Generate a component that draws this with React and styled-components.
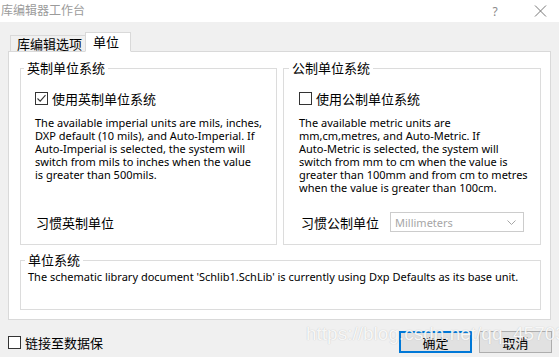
import React from "react";
import styled, { createGlobalStyle } from "styled-components";

const GlobalStyle = createGlobalStyle`
  html, body {
    margin: 0;
    padding: 0;
    background: #f0f0f0;
  }
  body {
    font-family: "Noto Sans", "Noto Sans CJK SC", sans-serif;
  }
`;

const Window = styled.div`
  position: relative;
  width: 559px;
  height: 357px;
  background: #f0f0f0;
  display: flex;
  flex-direction: column;
  overflow: hidden;
  font-family: "Noto Sans", "Noto Sans CJK SC", sans-serif;
`;

const TitleBar = styled.div`
  height: 22px;
  background: #fff;
  display: flex;
  align-items: center;
  padding: 0 1px 0 1px;
  color: #9b9b9b;
  font-size: 12px;
`;

const Title = styled.span`
  flex: 1;
  line-height: 22px;
`;

const TitleButton = styled.span`
  width: ${(p) => p.w}px;
  margin-right: ${(p) => p.mr || 0}px;
  display: flex;
  align-items: center;
  justify-content: center;
  color: #8a8a8a;
  font-size: 12px;
`;

const Body = styled.div`
  padding: 10px 8px 0 8px;
`;

const TabRow = styled.div`
  display: flex;
  align-items: flex-end;
  height: 20px;
  padding-left: 2px;
  margin-bottom: -1px;
`;

const Tab = styled.div`
  position: relative;
  z-index: ${(p) => (p.active ? 2 : 1)};
  box-sizing: border-box;
  width: ${(p) => p.w}px;
  height: ${(p) => (p.active ? 20 : 17)}px;
  margin-left: ${(p) => (p.active ? -1 : 0)}px;
  padding-left: ${(p) => p.pl}px;
  border: 1px solid #d9d9d9;
  border-bottom: ${(p) => (p.active ? "1px solid #fff" : "1px solid #d9d9d9")};
  background: ${(p) => (p.active ? "#fff" : "#f0f0f0")};
  font-size: 13px;
  line-height: ${(p) => (p.active ? 19 : 16)}px;
  color: #000;
  white-space: nowrap;
`;

const Panel = styled.div`
  box-sizing: border-box;
  height: 269px;
  border: 1px solid #d9d9d9;
  background: #fff;
  padding: 8px 9px 0 11px;
  display: flex;
  flex-direction: column;
`;

const Columns = styled.div`
  display: grid;
  grid-template-columns: 257px 258px;
  column-gap: 6px;
`;

const Group = styled.fieldset`
  box-sizing: border-box;
  margin: 0;
  min-width: 0;
  height: ${(p) => p.h}px;
  border: 1px solid #dcdcdc;
  padding: 0 ${(p) => p.px}px 0 ${(p) => p.px}px;
  display: flex;
  flex-direction: column;
`;

const Legend = styled.legend`
  margin-left: ${(p) => p.ml}px;
  padding: 0 3px;
  font-size: 13px;
  line-height: 17px;
  color: #000;
`;

const CheckRow = styled.label`
  display: flex;
  align-items: center;
  gap: 4px;
  height: 16px;
  margin-top: ${(p) => p.mt || 0}px;
  font-size: 13px;
  color: #000;
  white-space: nowrap;
`;

const Box = styled.span`
  box-sizing: border-box;
  width: 13px;
  height: 13px;
  border: 1px solid #333;
  background: #fff;
  display: flex;
  align-items: center;
  justify-content: center;
  flex: none;
`;

const Description = styled.div`
  margin-top: ${(p) => p.mt}px;
  font-size: 11px;
  line-height: 13px;
  color: #000;
  white-space: nowrap;
`;

const HabitRow = styled.div`
  margin-top: auto;
  margin-bottom: 12px;
  height: 20px;
  display: flex;
  align-items: center;
  gap: 11px;
  font-size: 13px;
  color: #000;
  padding-left: ${(p) => p.pl || 0}px;
`;

const Combo = styled.div`
  box-sizing: border-box;
  width: 134px;
  height: 20px;
  border: 1px solid #cccccc;
  background: #fff;
  display: flex;
  align-items: center;
  justify-content: space-between;
  padding: 0 7px 0 4px;
  color: #a6a6a6;
  font-size: 11px;
`;

const BaseGroupWrap = styled.div`
  margin-top: 7px;
`;

const Footer = styled.div`
  margin-top: 11px;
  height: 22px;
  display: flex;
  align-items: center;
  padding: 0 7px 0 8px;
`;

const Spacer = styled.div`
  flex: 1;
`;

const Button = styled.button`
  box-sizing: border-box;
  width: 73px;
  height: 22px;
  margin-left: ${(p) => p.ml || 0}px;
  border: ${(p) => (p.primary ? "2px solid #0078d7" : "1px solid #adadad")};
  background: #e1e1e1;
  font-family: "Noto Sans", "Noto Sans CJK SC", sans-serif;
  font-size: 13px;
  color: #000;
  padding: 0;
`;

const Watermark = styled.div`
  position: absolute;
  left: 306px;
  top: 323px;
  font-family: "Liberation Sans", Arial, sans-serif;
  font-size: 19px;
  color: rgba(255, 255, 255, 0.9);
  text-shadow: 0 0 1px rgba(120, 120, 120, 0.45);
  white-space: nowrap;
  pointer-events: none;
`;

const Checkbox = ({ checked }) => (
  <Box>
    {checked && (
      <svg width="11" height="11" viewBox="0 0 11 11">
        <polyline points="1.5,5.5 4.2,8.2 9.5,2.2" fill="none" stroke="#333" strokeWidth="1.1" />
      </svg>
    )}
  </Box>
);

const lines = (arr) =>
  arr.map((t, i) => (
    <React.Fragment key={i}>
      {t}
      {i < arr.length - 1 && <br />}
    </React.Fragment>
  ));

export default function App() {
  return (
    <Window>
      <GlobalStyle />
      <TitleBar>
        <Title>库编辑器工作台</Title>
        <TitleButton w={18} mr={18}>?</TitleButton>
        <TitleButton w={36}>
          <svg width="13" height="12" viewBox="0 0 13 12">
            <path d="M1 0.5 L12 11.5 M12 0.5 L1 11.5" stroke="#777" strokeWidth="1" />
          </svg>
        </TitleButton>
      </TitleBar>

      <Body>
        <TabRow>
          <Tab w={76} pl={6}>库编辑选项</Tab>
          <Tab active w={46} pl={7}>单位</Tab>
        </TabRow>

        <Panel>
          <Columns>
            <Group h={185} px={14}>
              <Legend ml={-11}>英制单位系统</Legend>
              <CheckRow mt={13}>
                <Checkbox checked />
                使用英制单位系统
              </CheckRow>
              <Description mt={10}>
                {lines([
                  "The available imperial units are mils, inches,",
                  "DXP default (10 mils), and Auto-Imperial. If",
                  "Auto-Imperial is selected, the system will",
                  "switch from mils to inches when the value",
                  "is greater than 500mils.",
                ])}
              </Description>
              <HabitRow pl={1}>习惯英制单位</HabitRow>
            </Group>

            <Group h={185} px={15}>
              <Legend ml={-10}>公制单位系统</Legend>
              <CheckRow mt={13}>
                <Checkbox />
                使用公制单位系统
              </CheckRow>
              <Description mt={10}>
                {lines([
                  "The available metric units are",
                  "mm,cm,metres, and Auto-Metric. If",
                  "Auto-Metric is selected, the system will",
                  "switch from mm to cm when the value is",
                  "greater than 100mm and from cm to metres",
                  "when the value is greater than 100cm.",
                ])}
              </Description>
              <HabitRow pl={2}>
                习惯公制单位
                <Combo>
                  Millimeters
                  <svg width="9" height="5" viewBox="0 0 9 5">
                    <polyline points="0.5,0.5 4.5,4.5 8.5,0.5" fill="none" stroke="#a6a6a6" strokeWidth="1" />
                  </svg>
                </Combo>
              </HabitRow>
            </Group>
          </Columns>

          <BaseGroupWrap>
            <Group h={58} px={7}>
              <Legend ml={-3}>单位系统</Legend>
              <Description mt={1}>
                The schematic library document 'Schlib1.SchLib' is currently using Dxp Defaults as its base unit.
              </Description>
            </Group>
          </BaseGroupWrap>
        </Panel>
      </Body>

      <Footer>
        <CheckRow>
          <Checkbox />
          链接至数据保
        </CheckRow>
        <Spacer />
        <Button primary>确定</Button>
        <Button ml={7}>取消</Button>
      </Footer>

      <Watermark>https://blog.csdn.net/qq_45703109</Watermark>
    </Window>
  );
}
